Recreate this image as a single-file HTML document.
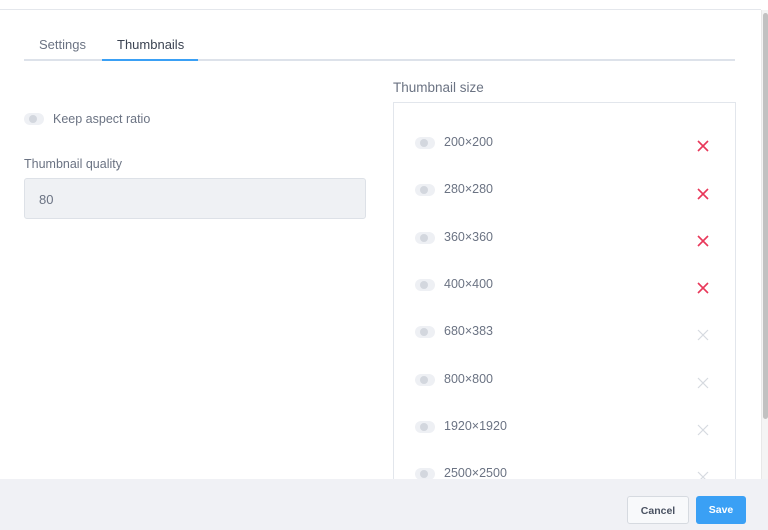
<!DOCTYPE html>
<html><head><style>
*{box-sizing:border-box;margin:0;padding:0}
body{width:768px;height:530px;overflow:hidden;background:#fff;font-family:"Liberation Sans",sans-serif;position:relative;color:#5d6677}
.topline{position:absolute;left:0;top:9px;width:761px;height:1px;background:#e4e7ec}
.sb{position:absolute;left:761px;top:10px;width:7px;height:469px;background:#f4f4f4;border-left:1px solid #e8e8e8}
.sb div{position:absolute;left:1px;top:3px;width:5px;height:406px;background:#c1c1c1;border-radius:3px}
.tabs{position:absolute;left:24px;top:37px;width:711px;height:24px;border-bottom:2px solid #dde2ea}
.tab{position:absolute;top:0;font-size:13px}
.ind{position:absolute;left:102px;top:59px;width:96px;height:2px;background:#3aa0f5}
.tog{position:absolute;width:20px;height:12px;border-radius:6px;background:#eef0f4}
.tog:after{content:"";position:absolute;left:5px;top:2px;width:8px;height:8px;border-radius:50%;background:#d3d7de}
.lbl{position:absolute;font-size:12.5px;color:#6b7383}
.inp{position:absolute;left:24px;top:178px;width:342px;height:41px;background:#eff1f4;border:1px solid #dde1e7;border-radius:3px;font-size:13px;padding:13px 0 0 14px;color:#6b7383}
.box{position:absolute;left:393px;top:102px;width:343px;height:400px;border:1px solid #e2e6ec}
.x{position:absolute;left:697px;width:12px;height:12px}
.foot{position:absolute;left:0;top:479px;width:768px;height:51px;background:#f0f1f5}
.btn{position:absolute;top:496px;height:28px;border-radius:3px;font-size:10.5px;font-weight:bold;text-align:center;line-height:28px}
</style></head><body>
<div class="topline"></div>
<div class="tabs"></div>
<div class="tab" style="left:39px;top:37px;color:#6b7383">Settings</div>
<div class="tab" style="left:117px;top:37px;color:#3b4352">Thumbnails</div>
<div class="ind"></div>
<div class="tog" style="left:24px;top:113px"></div>
<div class="lbl" style="left:53px;top:112px">Keep aspect ratio</div>
<div class="lbl" style="left:24px;top:157px">Thumbnail quality</div>
<div class="inp">80</div>
<div class="lbl" style="left:393px;top:80px;font-size:13.5px">Thumbnail size</div>
<div class="box"></div>
<div class="tog" style="left:415px;top:137px"></div><div class="lbl" style="left:444px;top:135px">200×200</div>
<div class="tog" style="left:415px;top:184px"></div><div class="lbl" style="left:444px;top:182px">280×280</div>
<div class="tog" style="left:415px;top:232px"></div><div class="lbl" style="left:444px;top:230px">360×360</div>
<div class="tog" style="left:415px;top:279px"></div><div class="lbl" style="left:444px;top:277px">400×400</div>
<div class="tog" style="left:415px;top:326px"></div><div class="lbl" style="left:444px;top:324px">680×383</div>
<div class="tog" style="left:415px;top:374px"></div><div class="lbl" style="left:444px;top:372px">800×800</div>
<div class="tog" style="left:415px;top:421px"></div><div class="lbl" style="left:444px;top:419px">1920×1920</div>
<div class="tog" style="left:415px;top:468px"></div><div class="lbl" style="left:444px;top:466px">2500×2500</div>
<svg class="x" style="top:140px" viewBox="0 0 12 12"><path d="M1 1L11 11M11 1L1 11" stroke="#e8385a" stroke-width="1.6"/></svg>
<svg class="x" style="top:188px" viewBox="0 0 12 12"><path d="M1 1L11 11M11 1L1 11" stroke="#e8385a" stroke-width="1.6"/></svg>
<svg class="x" style="top:235px" viewBox="0 0 12 12"><path d="M1 1L11 11M11 1L1 11" stroke="#e8385a" stroke-width="1.6"/></svg>
<svg class="x" style="top:282px" viewBox="0 0 12 12"><path d="M1 1L11 11M11 1L1 11" stroke="#e8385a" stroke-width="1.6"/></svg>
<svg class="x" style="top:329px" viewBox="0 0 12 12"><path d="M1 1L11 11M11 1L1 11" stroke="#d6dae0" stroke-width="1.2"/></svg>
<svg class="x" style="top:377px" viewBox="0 0 12 12"><path d="M1 1L11 11M11 1L1 11" stroke="#d6dae0" stroke-width="1.2"/></svg>
<svg class="x" style="top:424px" viewBox="0 0 12 12"><path d="M1 1L11 11M11 1L1 11" stroke="#d6dae0" stroke-width="1.2"/></svg>
<svg class="x" style="top:471px" viewBox="0 0 12 12"><path d="M1 1L11 11M11 1L1 11" stroke="#d6dae0" stroke-width="1.2"/></svg>
<div class="sb"><div></div></div>
<div class="foot"></div>
<div class="btn" style="left:627px;width:62px;background:#f8f9fb;border:1px solid #d6dae0;color:#4a5262">Cancel</div>
<div class="btn" style="left:696px;width:50px;background:#3aa0f5;color:#fff">Save</div>
</body></html>
